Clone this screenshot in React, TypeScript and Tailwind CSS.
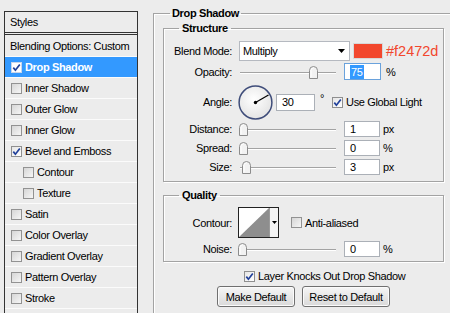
import React from "react";

function Box({ checked, onBlue }: { checked?: boolean; onBlue?: boolean }) {
  return (
    <span
      className={
        onBlue
          ? "flex h-[11px] w-[11px] shrink-0 items-center justify-center border border-[#c9d6ea] bg-white"
          : checked
          ? "flex h-[11px] w-[11px] shrink-0 items-center justify-center border border-[#8f8f8f] bg-linear-to-br from-[#e6e6e6] to-[#ffffff]"
          : "flex h-[11px] w-[11px] shrink-0 items-center justify-center border border-[#929292] bg-linear-to-br from-[#d6d6d6] to-[#f6f6f6]"
      }
    >
      {checked && (
        <svg width="9" height="9" viewBox="0 0 9 9">
          <path d="M1.3 4.6 L3.4 7.2 L7.8 1.4" stroke="#21409a" strokeWidth="1.7" fill="none" />
        </svg>
      )}
    </span>
  );
}

function Row({ label, checked, selected, sub }: { label: string; checked?: boolean; selected?: boolean; sub?: boolean }) {
  return (
    <div
      className={
        (selected ? "bg-[#3399ff] font-bold text-white " : "text-black ") +
        (sub ? "pl-[18px] " : "pl-[6px] ") +
        "flex h-[21px] items-center gap-[3px] border-b border-[#fbfbfb]"
      }
    >
      <Box checked={checked} onBlue={selected} />
      <span>{label}</span>
    </div>
  );
}

function Thumb() {
  return (
    <svg width="9" height="13" viewBox="0 0 9 13">
      <path d="M0.5 12.5 V4.5 Q0.5 0.5 4.5 0.5 Q8.5 0.5 8.5 4.5 V12.5 Z" fill="#f2f2f2" stroke="#8c8c8c" />
      <path d="M2 11.5 V4.5 Q2 2 4.5 2" stroke="#ffffff" fill="none" />
    </svg>
  );
}

function Slider({ pos }: { pos: number }) {
  return (
    <div className="relative h-[14px] w-[100px]">
      <div className="absolute left-[2px] right-[2px] top-[7px] h-[2px] border-t border-[#a3a3a3] border-b border-b-white" />
      <div className="absolute top-[1px]" style={{ left: pos - 4.5 }}>
        <Thumb />
      </div>
    </div>
  );
}

function Field({ children, focus, w = 36, h = 16 }: { children: React.ReactNode; focus?: boolean; w?: number; h?: number }) {
  return (
    <div
      className={
        (focus ? "border-[#6aa2dc] " : "border-[#abb0b7] ") +
        "flex items-center border bg-white pl-[5px]"
      }
      style={{ width: w, height: h }}
    >
      {children}
    </div>
  );
}

function Label({ children }: { children: React.ReactNode }) {
  return <div className="w-[68px] shrink-0 text-right">{children}</div>;
}

function SliderRow({ label, pos, value, unit, mt }: { label: string; pos: number; value: React.ReactNode; unit: string; mt: string }) {
  return (
    <div className={mt + " flex h-[16px] items-center"}>
      <Label>{label}</Label>
      <div className="ml-[6px]">
        <Slider pos={pos} />
      </div>
      <div className="ml-[6px]">
        <Field>{value}</Field>
      </div>
      <span className="ml-[3px]">{unit}</span>
    </div>
  );
}

export default function App() {
  return (
    <div className="flex h-[313px] w-[450px] overflow-hidden bg-[#ececec] font-['Liberation_Sans',Arial,sans-serif] text-[11px] leading-[14px] tracking-[-0.35px] text-black">
      {/* Left styles list */}
      <div className="ml-[4px] mt-[11px] h-[330px] w-[134px] shrink-0 border border-[#333333] bg-[#ececec]">
        <div className="flex h-[20px] items-center pl-[5px]">Styles</div>
        <div className="h-[3px] border-y border-[#333333] bg-[#ececec]" />
        <div className="flex h-[22px] items-center border-b border-[#fbfbfb] pl-[5px]">Blending Options: Custom</div>
        <Row label="Drop Shadow" checked selected />
        <Row label="Inner Shadow" />
        <Row label="Outer Glow" />
        <Row label="Inner Glow" />
        <Row label="Bevel and Emboss" checked />
        <Row label="Contour" sub />
        <Row label="Texture" sub />
        <Row label="Satin" />
        <Row label="Color Overlay" />
        <Row label="Gradient Overlay" />
        <Row label="Pattern Overlay" />
        <Row label="Stroke" />
      </div>

      {/* Right panel */}
      <fieldset className="ml-[15px] mt-[6px] h-[340px] w-[330px] shrink-0 border border-[#a3a3a3] pl-[9px] shadow-[inset_1px_1px_0_#ffffff]">
        <legend className="ml-[7px] px-[2px] font-bold leading-[14px]">Drop Shadow</legend>

        {/* Structure */}
        <fieldset className="mt-[1px] w-[281px] border border-[#a3a3a3] pb-[6px] pt-[6px] shadow-[inset_1px_1px_0_#ffffff,1px_1px_0_#ffffff]">
          <legend className="ml-[15px] px-[3px] font-bold leading-[14px]">Structure</legend>

          <div className="flex h-[20px] items-center">
            <Label>Blend Mode:</Label>
            <div className="ml-[7px] flex h-[20px] w-[111px] items-center justify-between border border-[#b5b9c0] bg-white pl-[3px] pr-[4px]">
              <span>Multiply</span>
              <svg width="7" height="4" viewBox="0 0 7 4">
                <path d="M0 0 H7 L3.5 4 Z" fill="#000" />
              </svg>
            </div>
            <div className="ml-[3px] h-[16px] w-[30px] border border-[#d8d8d8] bg-[#f2472d]" />
            <span className="ml-[3px] text-[14.5px] leading-[16px] tracking-normal text-[#f2472d]">#f2472d</span>
          </div>

          <div className="mt-[2px] flex h-[17px] items-center">
            <Label>Opacity:</Label>
            <div className="ml-[6px]">
              <Slider pos={75} />
            </div>
            <div className="ml-[6px]">
              <Field focus w={37} h={17}>
                <span className="bg-[#3399ff] px-[1px] text-white">75</span>
              </Field>
            </div>
            <span className="ml-[5px]">%</span>
          </div>

          <div className="mt-[5px] flex h-[34px] items-center">
            <Label>Angle:</Label>
            <div className="ml-[6px]">
              <svg width="35" height="35" viewBox="0 0 35 35">
                <defs>
                  <radialGradient id="dialg" cx="0.45" cy="0.4" r="0.6">
                    <stop offset="0" stopColor="#ffffff" />
                    <stop offset="1" stopColor="#e4e4e4" />
                  </radialGradient>
                </defs>
                <circle cx="17.5" cy="17.5" r="16.4" fill="url(#dialg)" stroke="#3f4d7a" strokeWidth="1.5" />
                <line x1="17.5" y1="17.5" x2="30.5" y2="10" stroke="#000" strokeWidth="1.2" />
                <circle cx="17.5" cy="17.5" r="1.7" fill="#000" />
              </svg>
            </div>
            <div className="ml-[3px]">
              <Field w={39} h={17}>30</Field>
            </div>
            <span className="ml-[5px] self-start pt-[6px]">°</span>
            <div className="ml-[8px] flex items-center gap-[3px]">
              <Box checked />
              <span>Use Global Light</span>
            </div>
          </div>

          <SliderRow mt="mt-[2px]" label="Distance:" pos={5} value="1" unit="px" />
          <SliderRow mt="mt-[3px]" label="Spread:" pos={5} value="0" unit="%" />
          <SliderRow mt="mt-[3px]" label="Size:" pos={8} value="3" unit="px" />
        </fieldset>

        {/* Quality */}
        <fieldset className="mt-[6px] w-[281px] border border-[#a3a3a3] pb-[4px] pt-[5px] shadow-[inset_1px_1px_0_#ffffff,1px_1px_0_#ffffff]">
          <legend className="ml-[15px] px-[3px] font-bold leading-[14px]">Quality</legend>

          <div className="flex h-[31px] items-center">
            <Label>Contour:</Label>
            <div className="ml-[6px] flex h-[31px] w-[41px] border border-[#222222] bg-white">
              <svg width="30" height="29" viewBox="0 0 30 29">
                <path d="M0 29 L30 0 V29 Z" fill="#8e8e8e" />
              </svg>
              <div className="flex flex-1 items-center justify-center border-l border-[#9a9a9a] bg-[#f4f4f4]">
                <svg width="5" height="3" viewBox="0 0 5 3">
                  <path d="M0 0 H5 L2.5 3 Z" fill="#000" />
                </svg>
              </div>
            </div>
            <div className="ml-[12px] flex items-center gap-[3px]">
              <Box />
              <span>Anti-aliased</span>
            </div>
          </div>

          <SliderRow mt="mt-[3px]" label="Noise:" pos={4} value="0" unit="%" />
        </fieldset>

        <div className="mt-[7px] flex w-[281px] items-center gap-[3px] pl-[81px]">
          <Box checked />
          <span>Layer Knocks Out Drop Shadow</span>
        </div>

        <div className="mt-[3px] flex w-[281px] justify-center gap-[7px]">
          <button className="h-[21px] w-[78px] rounded-[3px] border border-[#707070] bg-linear-to-b from-[#f6f6f6] to-[#d9d9d9] text-center shadow-[inset_0_0_0_1px_#fbfbfb]">
            Make Default
          </button>
          <button className="h-[21px] w-[88px] rounded-[3px] border border-[#707070] bg-linear-to-b from-[#f6f6f6] to-[#d9d9d9] text-center shadow-[inset_0_0_0_1px_#fbfbfb]">
            Reset to Default
          </button>
        </div>
      </fieldset>
    </div>
  );
}
